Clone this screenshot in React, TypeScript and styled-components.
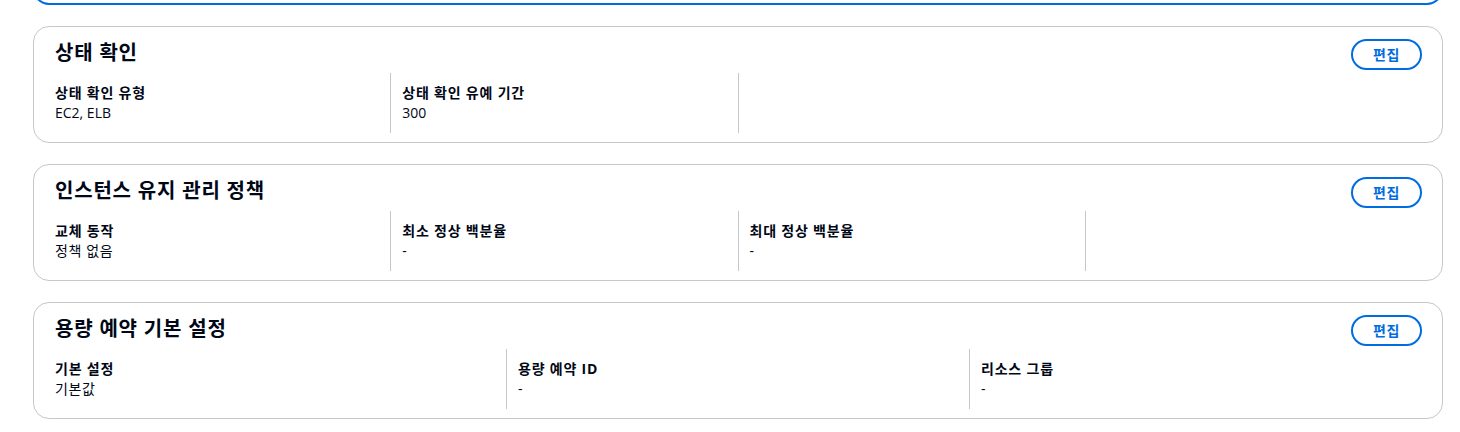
import React from "react";
import styled, { createGlobalStyle } from "styled-components";

const GlobalStyle = createGlobalStyle`
  html, body {
    margin: 0;
    padding: 0;
    background: #ffffff;
  }
  body {
    font-family: "Open Sans", "Noto Sans CJK KR", sans-serif;
    color: #000716;
  }
`;

const Page = styled.div`
  display: flex;
  flex-direction: column;
  gap: 21px;
  padding: 0 17px 12px 33px;
`;

const Clip = styled.div`
  height: 5px;
  overflow: hidden;
  display: flex;
  flex-direction: column;
  justify-content: flex-end;
`;

const SelectedCard = styled.div`
  flex-shrink: 0;
  height: 120px;
  border: 2px solid #006ce0;
  border-radius: 16px;
`;

const Card = styled.section`
  border: 1px solid #c6c6cd;
  border-radius: 16px;
  background: #ffffff;
  padding: 12px 20px 9px 21px;
`;

const Header = styled.div`
  display: flex;
  justify-content: space-between;
  align-items: flex-start;
  height: 31px;
  margin-bottom: 3px;
`;

const Title = styled.h2`
  margin: 0;
  padding-top: 3px;
  font-size: 20px;
  line-height: 22px;
  font-weight: 700;
  letter-spacing: 0.8px;
  color: #000716;
`;

const EditButton = styled.button`
  box-sizing: border-box;
  height: 31px;
  width: 71px;
  border: 2px solid #006ce0;
  border-radius: 20px;
  background: #ffffff;
  color: #006ce0;
  font-family: "Open Sans", "Noto Sans CJK KR", sans-serif;
  font-size: 14px;
  font-weight: 700;
  line-height: 20px;
  letter-spacing: 0.6px;
  padding: 0;
  cursor: pointer;
`;

const Grid = styled.div<{ $cols: number }>`
  display: grid;
  grid-template-columns: repeat(${(p) => p.$cols}, 1fr);
  column-gap: 22px;
`;

const Item = styled.div<{ $divider: boolean }>`
  padding: 10px 0;
  margin-right: ${(p) => (p.$divider ? "-11px" : "0")};
  padding-right: ${(p) => (p.$divider ? "10px" : "0")};
  border-right: ${(p) => (p.$divider ? "1px solid #c6c6cd" : "none")};
`;

const Label = styled.div`
  font-size: 14px;
  line-height: 20px;
  font-weight: 700;
  letter-spacing: 0.8px;
  color: #000716;
`;

const Value = styled.div<{ $hangul: boolean }>`
  font-size: 14px;
  line-height: 20px;
  letter-spacing: ${(p) => (p.$hangul ? "0.6px" : "0")};
  color: #000716;
`;

type Pair = { label: string; value: string };

const sections: { title: string; cols: number; items: Pair[] }[] = [
  {
    title: "상태 확인",
    cols: 4,
    items: [
      { label: "상태 확인 유형", value: "EC2, ELB" },
      { label: "상태 확인 유예 기간", value: "300" },
    ],
  },
  {
    title: "인스턴스 유지 관리 정책",
    cols: 4,
    items: [
      { label: "교체 동작", value: "정책 없음" },
      { label: "최소 정상 백분율", value: "-" },
      { label: "최대 정상 백분율", value: "-" },
    ],
  },
  {
    title: "용량 예약 기본 설정",
    cols: 3,
    items: [
      { label: "기본 설정", value: "기본값" },
      { label: "용량 예약 ID", value: "-" },
      { label: "리소스 그룹", value: "-" },
    ],
  },
];

const hasHangul = (s: string) => /[\uac00-\ud7a3]/.test(s);

const App: React.FC = () => {
  return (
    <>
      <GlobalStyle />
      <Page>
        <Clip>
          <SelectedCard />
        </Clip>
        {sections.map((s) => (
          <Card key={s.title}>
            <Header>
              <Title>{s.title}</Title>
              <EditButton>편집</EditButton>
            </Header>
            <Grid $cols={s.cols}>
              {s.items.map((it, i) => (
                <Item key={it.label} $divider={(i + 1) % s.cols !== 0}>
                  <Label>{it.label}</Label>
                  <Value $hangul={hasHangul(it.value)}>{it.value}</Value>
                </Item>
              ))}
            </Grid>
          </Card>
        ))}
      </Page>
    </>
  );
};

export default App;
